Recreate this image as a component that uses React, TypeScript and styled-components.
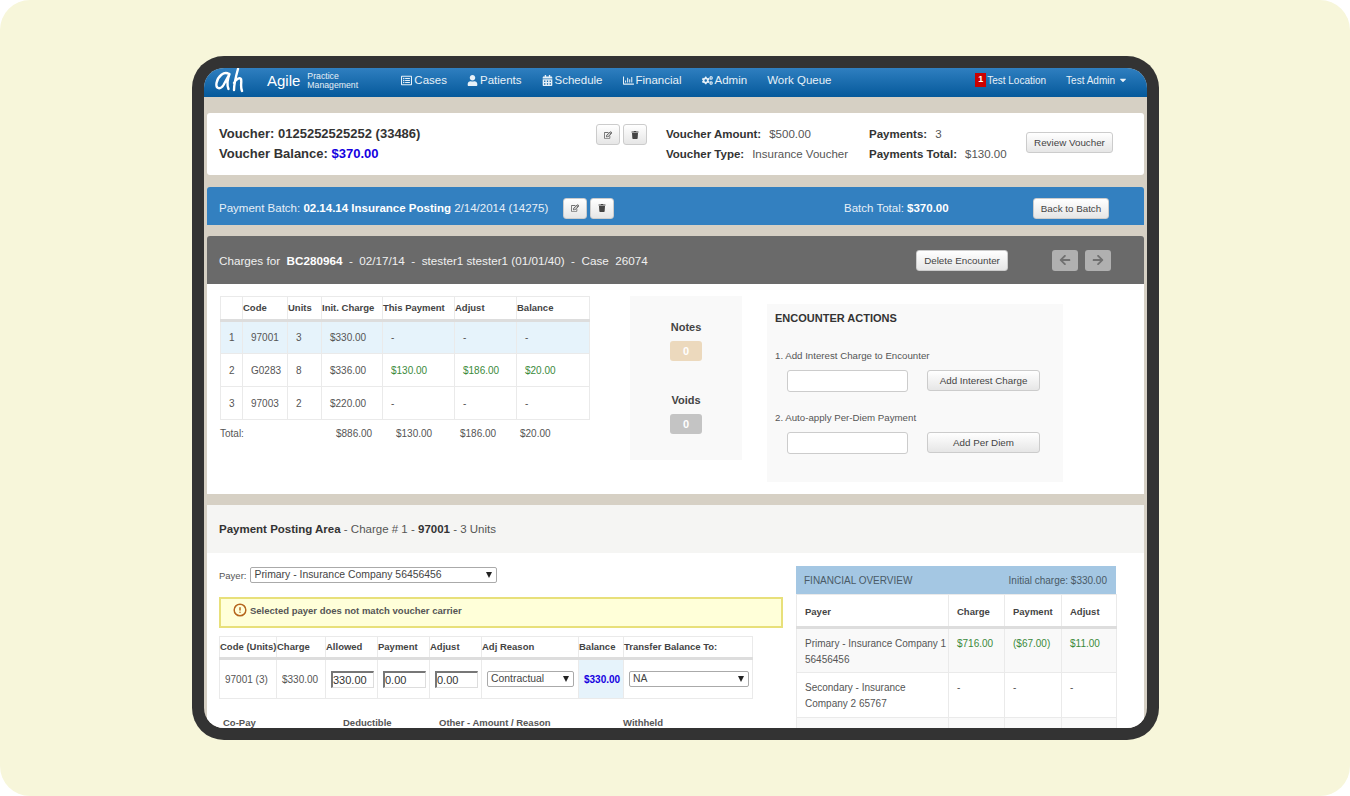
import React from "react";
import styled, { createGlobalStyle } from "styled-components";
import { FaUser, FaCogs, FaTrash, FaArrowLeft, FaArrowRight, FaRegEdit, FaRegListAlt, FaCalendarAlt, FaRegChartBar, FaCaretDown } from "react-icons/fa";
import { FiAlertCircle } from "react-icons/fi";

const GlobalStyle = createGlobalStyle`
  html, body { margin: 0; padding: 0; background: #fff; }
  body { font-family: "Liberation Sans", Arial, sans-serif; font-size: 10px; color: #555; }
  table { border-collapse: collapse; table-layout: fixed; }
  * { box-sizing: border-box; }
`;

const Page = styled.div`
  width: 1350px;
  height: 796px;
  background: #f7f6da;
  border-radius: 30px;
  padding: 56px 191px 56px 192px;
  overflow: hidden;
`;

const Device = styled.div`
  width: 967px;
  height: 684px;
  background: #333;
  border-radius: 32px;
  padding: 12px;
`;

const Screen = styled.div`
  height: 660px;
  background: #d6d0c4;
  border-radius: 20px;
  overflow: hidden;
`;

const NavBar = styled.nav`
  height: 29px;
  background: linear-gradient(#2f7fc0, #05599b);
  display: flex;
  align-items: center;
  color: #fff;
  padding: 0 19px 5px 10px;
`;

const Logo = styled.svg`
  width: 32px;
  height: 26px;
  flex: none;
  align-self: flex-start;
`;

const Brand = styled.div`
  font-size: 15px;
  margin-left: 21px;
`;

const BrandSub = styled.div`
  font-size: 8.7px;
  line-height: 9px;
  margin: 2px 0 0 7px;
  width: 60px;
  opacity: 0.9;
`;

const NavLinks = styled.div`
  display: flex;
  gap: 20px;
  margin-left: 34px;
  font-size: 11.5px;
  flex: 1;
  color: #e8f1f8;
`;

const NavLink = styled.span`
  display: flex;
  align-items: center;
  gap: 2px;
  svg { font-size: 11px; }
`;

const NavRight = styled.div`
  display: flex;
  align-items: center;
  font-size: 10px;
  color: #e8f1f8;
`;

const Badge = styled.span`
  background: #c00;
  color: #fff;
  font-weight: bold;
  font-size: 9px;
  width: 11px;
  height: 14px;
  line-height: 12px;
  text-align: center;
  margin-right: 1px;
`;

const AdminMenu = styled.span`
  display: flex;
  align-items: center;
  gap: 3px;
  margin-left: 20px;
`;

const Body = styled.div`
  padding: 16px 3px 0;
`;

const VoucherCard = styled.section`
  height: 62px;
  background: #fff;
  border-radius: 3px;
  display: flex;
  padding: 11px 12px;
  line-height: 20px;
  font-size: 11.5px;
`;

const VoucherTitle = styled.div`
  width: 377px;
  font-size: 13px;
  font-weight: bold;
  color: #333;
`;

const Blue = styled.span`
  color: #1400e0;
`;

const IconButtons = styled.div`
  display: flex;
  gap: 3px;
`;

const IconButton = styled.button`
  width: 24px;
  height: 21px;
  padding: 0;
  border: 1px solid #ccc;
  border-radius: 3px;
  background: linear-gradient(#fff, #e6e6e6);
  color: #444;
  font-size: 8px;
  display: flex;
  align-items: center;
  justify-content: center;
`;

const VoucherFacts = styled.div<{ $width: number; $left?: number }>`
  width: ${p => p.$width}px;
  margin-left: ${p => p.$left || 0}px;
  white-space: nowrap;
`;

const Fact = styled.b`
  color: #333;
  margin-right: 8px;
`;

const Button = styled.button<{ $width: number; $top?: number }>`
  width: ${p => p.$width}px;
  height: 21px;
  margin-top: ${p => p.$top || 0}px;
  flex: none;
  padding: 0;
  border: 1px solid #ccc;
  border-radius: 3px;
  background: linear-gradient(#fff, #e6e6e6);
  color: #444;
  font: 9.8px "Liberation Sans", Arial, sans-serif;
`;

const BatchBar = styled.section`
  height: 38px;
  margin-top: 12px;
  background: #3380c0;
  border-radius: 3px 3px 0 0;
  color: #e6eff7;
  display: flex;
  align-items: center;
  padding: 4px 12px 0;
  font-size: 11.5px;
  b { color: #fff; }
`;

const BatchText = styled.div`
  width: 344px;
  white-space: nowrap;
`;

const BatchTotal = styled.div`
  margin-left: 230px;
  width: 189px;
`;

const EncounterBar = styled.section`
  height: 48px;
  margin-top: 11px;
  background: #6a6a6a;
  border-radius: 3px 3px 0 0;
  color: #f0f0f0;
  display: flex;
  align-items: center;
  padding: 0 12px;
  font-size: 11.7px;
  white-space: pre;
  b { color: #fff; }
`;

const EncounterText = styled.div`
  width: 697px;
`;

const ArrowButton = styled.span<{ $first?: boolean }>`
  width: 26px;
  height: 21px;
  margin-left: ${p => (p.$first ? 44 : 7)}px;
  background: #b0b0b0;
  border-radius: 3px;
  color: #707070;
  font-size: 12px;
  display: flex;
  align-items: center;
  justify-content: center;
`;

const ChargesPanel = styled.section`
  height: 210px;
  background: #fff;
  display: flex;
  align-items: flex-start;
  padding: 12px 0 0 13px;
`;

const ChargesColumn = styled.div`
  width: 369px;
  margin-right: 41px;
`;

const DataTable = styled.table<{ $width: number }>`
  width: ${p => p.$width}px;
  font-size: 10px;
  th, td { border: 1px solid #eaeaea; }
  th {
    color: #444;
    font-weight: bold;
    font-size: 9.5px;
    text-align: left;
    padding: 0 0 1px;
    border-bottom: 3px solid #ddd;
    white-space: nowrap;
  }
`;

const ChargeHeadRow = styled.tr`
  height: 24px;
`;

const ChargeRow = styled.tr<{ $active?: boolean }>`
  height: 33px;
  background: ${p => (p.$active ? "#e6f3fb" : "#fff")};
  td { padding: 0 0 0 8px; }
`;

const Green = styled.span`
  color: #3b8a3b;
`;

const TotalRow = styled.div`
  display: grid;
  grid-template-columns: 116px 60px 64px 60px 1fr;
  margin-top: 8px;
  line-height: 12px;
`;

const CountPanel = styled.aside`
  width: 112px;
  height: 164px;
  background: #f9f9f9;
  margin-right: 25px;
  padding-top: 25px;
  display: flex;
  flex-direction: column;
  align-items: center;
`;

const CountTitle = styled.div<{ $spaced?: boolean }>`
  font-size: 11px;
  font-weight: bold;
  color: #444;
  margin-top: ${p => (p.$spaced ? 33 : 0)}px;
`;

const CountBox = styled.div<{ $bg: string }>`
  width: 32px;
  height: 20px;
  margin-top: 8px;
  background: ${p => p.$bg};
  border-radius: 3px;
  color: #fff;
  font-weight: bold;
  font-size: 11px;
  text-align: center;
  line-height: 20px;
`;

const ActionsPanel = styled.aside`
  width: 296px;
  height: 178px;
  margin-top: 8px;
  background: #f9f9f9;
  padding: 8px 8px;
`;

const ActionsTitle = styled.div`
  font-size: 11px;
  font-weight: bold;
  color: #333;
  margin-bottom: 26px;
`;

const ActionLabel = styled.div`
  font-size: 9.7px;
  line-height: 12px;
`;

const ActionRow = styled.div`
  display: flex;
  gap: 19px;
  margin: 8px 0 20px 12px;
`;

const TextBox = styled.input`
  width: 121px;
  height: 22px;
  border: 1px solid #ccc;
  border-radius: 3px;
  background: #fff;
`;

const PostingCard = styled.section`
  margin-top: 11px;
  background: #fff;
  border-radius: 3px 3px 0 0;
  height: 300px;
`;

const PostingHead = styled.header`
  height: 48px;
  background: #f5f5f3;
  padding: 0 12px;
  font-size: 11.5px;
  line-height: 49px;
  b { color: #333; }
`;

const PostingBody = styled.div`
  display: flex;
  padding: 13px 0 0 12px;
`;

const PostingLeft = styled.div`
  width: 577px;
`;

const PayerRow = styled.div`
  display: flex;
  align-items: center;
  gap: 4px;
  font-size: 9.5px;
  height: 18px;
`;

const FakeSelect = styled.div<{ $width: number }>`
  width: ${p => p.$width}px;
  height: 16px;
  border: 1px solid #aaa;
  border-radius: 2px;
  background: #fff;
  color: #444;
  font-size: 10.4px;
  line-height: 14px;
  padding-left: 3px;
  display: flex;
  justify-content: space-between;
  align-items: center;
`;

const SelectArrow = styled.i`
  width: 0;
  height: 0;
  margin-right: 4px;
  border-left: 3px solid transparent;
  border-right: 3px solid transparent;
  border-top: 6px solid #222;
`;

const WarningBox = styled.div`
  width: 564px;
  height: 31px;
  margin-top: 13px;
  background: #ffffd9;
  border: 2px solid #e8e07a;
  display: flex;
  align-items: center;
  gap: 3px;
  padding: 0 0 5px 12px;
  font-size: 9.5px;
  font-weight: bold;
  color: #555;
  svg { font-size: 14px; color: #b5651d; stroke-width: 2.5; }
`;

const TableGap = styled.div`
  margin-top: 8px;
`;

const PostRow = styled.tr`
  height: 40px;
  td { padding: 0 0 0 5px; }
`;

const PostHeadRow = styled.tr`
  height: 22px;
`;

const Cell = styled.td<{ $tint?: boolean }>`
  background: ${p => (p.$tint ? "#e6f3fb" : "transparent")};
`;

const AmountBox = styled.input`
  width: 43px;
  height: 17px;
  border: 1px solid #ddd;
  border-top: 2px solid #777;
  border-left: 2px solid #777;
  font: 11px "Liberation Sans", Arial, sans-serif;
  color: #333;
  padding: 0;
`;

const FieldLabels = styled.div`
  display: grid;
  grid-template-columns: 120px 96px 184px 1fr;
  margin: 18px 0 0 4px;
  font-size: 9.5px;
  font-weight: bold;
  color: #555;
  line-height: 12px;
`;

const OverviewColumn = styled.div`
  width: 320px;
`;

const OverviewHead = styled.div`
  height: 28px;
  background: #a4c7e3;
  display: flex;
  justify-content: space-between;
  align-items: center;
  padding: 0 9px 0 8px;
  font-size: 10px;
  color: #4a5a66;
`;

const OverviewRow = styled.tr<{ $shade?: boolean }>`
  height: 45px;
  background: ${p => (p.$shade ? "#f9f9f9" : "#fff")};
  td { padding: 7px 0 0 8px; vertical-align: top; line-height: 16px; }
`;

const OverviewHeadRow = styled.tr`
  height: 33px;
  th { padding: 2px 0 0 8px; }
`;

const cols = [22, 45, 34, 61, 72, 62, 73];
const postCols = [57, 49, 52, 52, 52, 97, 45, 129];
const overviewCols = [152, 56, 57, 55];

const charges = [
  { n: "1", code: "97001", units: "3", init: "$330.00", pay: "-", adj: "-", bal: "-", active: true },
  { n: "2", code: "G0283", units: "8", init: "$336.00", pay: "$130.00", adj: "$186.00", bal: "$20.00" },
  { n: "3", code: "97003", units: "2", init: "$220.00", pay: "-", adj: "-", bal: "-" },
];

const Colgroup = ({ widths }: { widths: number[] }) => (
  <colgroup>
    {widths.map((w, i) => (
      <col key={i} width={w} />
    ))}
  </colgroup>
);

export default function App() {
  return (
    <Page>
      <GlobalStyle />
      <Device>
        <Screen>
          <NavBar>
            <Logo viewBox="0 0 32 26" fill="none" stroke="#fff" strokeWidth="2.4" strokeLinecap="round" strokeLinejoin="round">
              <path d="M15 6C10 3 4 8 2.5 15c-1 6 4 7 7 2l6-11c-2 5-3 10-1 15" />
              <path d="M24 1c-2 7-4 14-4 21M20 15c2-4 6-6 7-4 1 3-1 7 1 12" />
            </Logo>
            <Brand>Agile</Brand>
            <BrandSub>Practice Management</BrandSub>
            <NavLinks>
              <NavLink><FaRegListAlt />Cases</NavLink>
              <NavLink><FaUser />Patients</NavLink>
              <NavLink><FaCalendarAlt />Schedule</NavLink>
              <NavLink><FaRegChartBar />Financial</NavLink>
              <NavLink><FaCogs />Admin</NavLink>
              <NavLink>Work Queue</NavLink>
            </NavLinks>
            <NavRight>
              <Badge>1</Badge>Test Location
              <AdminMenu>Test Admin <FaCaretDown /></AdminMenu>
            </NavRight>
          </NavBar>
          <Body>
            <VoucherCard>
              <VoucherTitle>
                Voucher: 0125252525252 (33486)
                <br />
                Voucher Balance: <Blue>$370.00</Blue>
              </VoucherTitle>
              <IconButtons>
                <IconButton><FaRegEdit /></IconButton>
                <IconButton><FaTrash /></IconButton>
              </IconButtons>
              <VoucherFacts $width={203} $left={19}>
                <Fact>Voucher Amount:</Fact>$500.00
                <br />
                <Fact>Voucher Type:</Fact>Insurance Voucher
              </VoucherFacts>
              <VoucherFacts $width={157}>
                <Fact>Payments:</Fact>3
                <br />
                <Fact>Payments Total:</Fact>$130.00
              </VoucherFacts>
              <Button $width={87} $top={8}>Review Voucher</Button>
            </VoucherCard>
            <BatchBar>
              <BatchText>
                Payment Batch: <b>02.14.14 Insurance Posting</b> 2/14/2014 (14275)
              </BatchText>
              <IconButtons>
                <IconButton><FaRegEdit /></IconButton>
                <IconButton><FaTrash /></IconButton>
              </IconButtons>
              <BatchTotal>
                Batch Total: <b>$370.00</b>
              </BatchTotal>
              <Button $width={76}>Back to Batch</Button>
            </BatchBar>
            <EncounterBar>
              <EncounterText>
                Charges for  <b>BC280964</b>  -  02/17/14  -  stester1 stester1 (01/01/40)  -  Case  26074
              </EncounterText>
              <Button $width={92}>Delete Encounter</Button>
              <ArrowButton $first><FaArrowLeft /></ArrowButton>
              <ArrowButton><FaArrowRight /></ArrowButton>
            </EncounterBar>
            <ChargesPanel>
              <ChargesColumn>
                <DataTable $width={369}>
                  <Colgroup widths={cols} />
                  <thead>
                    <ChargeHeadRow>
                      <th />
                      <th>Code</th>
                      <th>Units</th>
                      <th>Init. Charge</th>
                      <th>This Payment</th>
                      <th>Adjust</th>
                      <th>Balance</th>
                    </ChargeHeadRow>
                  </thead>
                  <tbody>
                    {charges.map(c => {
                      const Amount = c.pay === "-" ? "span" : Green;
                      return (
                        <ChargeRow key={c.n} $active={c.active}>
                          <td>{c.n}</td>
                          <td>{c.code}</td>
                          <td>{c.units}</td>
                          <td>{c.init}</td>
                          <td><Amount>{c.pay}</Amount></td>
                          <td><Amount>{c.adj}</Amount></td>
                          <td><Amount>{c.bal}</Amount></td>
                        </ChargeRow>
                      );
                    })}
                  </tbody>
                </DataTable>
                <TotalRow>
                  <span>Total:</span>
                  <span>$886.00</span>
                  <span>$130.00</span>
                  <span>$186.00</span>
                  <span>$20.00</span>
                </TotalRow>
              </ChargesColumn>
              <CountPanel>
                <CountTitle>Notes</CountTitle>
                <CountBox $bg="#ecd9bd">0</CountBox>
                <CountTitle $spaced>Voids</CountTitle>
                <CountBox $bg="#c4c4c4">0</CountBox>
              </CountPanel>
              <ActionsPanel>
                <ActionsTitle>ENCOUNTER ACTIONS</ActionsTitle>
                <ActionLabel>1. Add Interest Charge to Encounter</ActionLabel>
                <ActionRow>
                  <TextBox />
                  <Button $width={113}>Add Interest Charge</Button>
                </ActionRow>
                <ActionLabel>2. Auto-apply Per-Diem Payment</ActionLabel>
                <ActionRow>
                  <TextBox />
                  <Button $width={113}>Add Per Diem</Button>
                </ActionRow>
              </ActionsPanel>
            </ChargesPanel>
            <PostingCard>
              <PostingHead>
                <b>Payment Posting Area</b> - Charge # 1 - <b>97001</b> - 3 Units
              </PostingHead>
              <PostingBody>
                <PostingLeft>
                  <PayerRow>
                    Payer:
                    <FakeSelect $width={247}>Primary - Insurance Company 56456456<SelectArrow /></FakeSelect>
                  </PayerRow>
                  <WarningBox><FiAlertCircle />Selected payer does not match voucher carrier</WarningBox>
                  <TableGap>
                    <DataTable $width={533}>
                      <Colgroup widths={postCols} />
                      <thead>
                        <PostHeadRow>
                          <th>Code (Units)</th>
                          <th>Charge</th>
                          <th>Allowed</th>
                          <th>Payment</th>
                          <th>Adjust</th>
                          <th>Adj Reason</th>
                          <th>Balance</th>
                          <th>Transfer Balance To:</th>
                        </PostHeadRow>
                      </thead>
                      <tbody>
                        <PostRow>
                          <td>97001 (3)</td>
                          <td>$330.00</td>
                          <td><AmountBox defaultValue="330.00" /></td>
                          <td><AmountBox defaultValue="0.00" /></td>
                          <td><AmountBox defaultValue="0.00" /></td>
                          <td><FakeSelect $width={87}>Contractual<SelectArrow /></FakeSelect></td>
                          <Cell $tint><Blue><b>$330.00</b></Blue></Cell>
                          <td><FakeSelect $width={120}>NA<SelectArrow /></FakeSelect></td>
                        </PostRow>
                      </tbody>
                    </DataTable>
                  </TableGap>
                  <FieldLabels>
                    <span>Co-Pay</span>
                    <span>Deductible</span>
                    <span>Other - Amount / Reason</span>
                    <span>Withheld</span>
                  </FieldLabels>
                </PostingLeft>
                <OverviewColumn>
                  <OverviewHead>
                    <span>FINANCIAL OVERVIEW</span>
                    <span>Initial charge: $330.00</span>
                  </OverviewHead>
                  <DataTable $width={320}>
                    <Colgroup widths={overviewCols} />
                    <thead>
                      <OverviewHeadRow>
                        <th>Payer</th>
                        <th>Charge</th>
                        <th>Payment</th>
                        <th>Adjust</th>
                      </OverviewHeadRow>
                    </thead>
                    <tbody>
                      <OverviewRow $shade>
                        <td>Primary - Insurance Company 1 56456456</td>
                        <td><Green>$716.00</Green></td>
                        <td><Green>($67.00)</Green></td>
                        <td><Green>$11.00</Green></td>
                      </OverviewRow>
                      <OverviewRow>
                        <td>Secondary - Insurance Company 2 65767</td>
                        <td>-</td>
                        <td>-</td>
                        <td>-</td>
                      </OverviewRow>
                      <OverviewRow $shade>
                        <td />
                        <td />
                        <td />
                        <td />
                      </OverviewRow>
                    </tbody>
                  </DataTable>
                </OverviewColumn>
              </PostingBody>
            </PostingCard>
          </Body>
        </Screen>
      </Device>
    </Page>
  );
}
